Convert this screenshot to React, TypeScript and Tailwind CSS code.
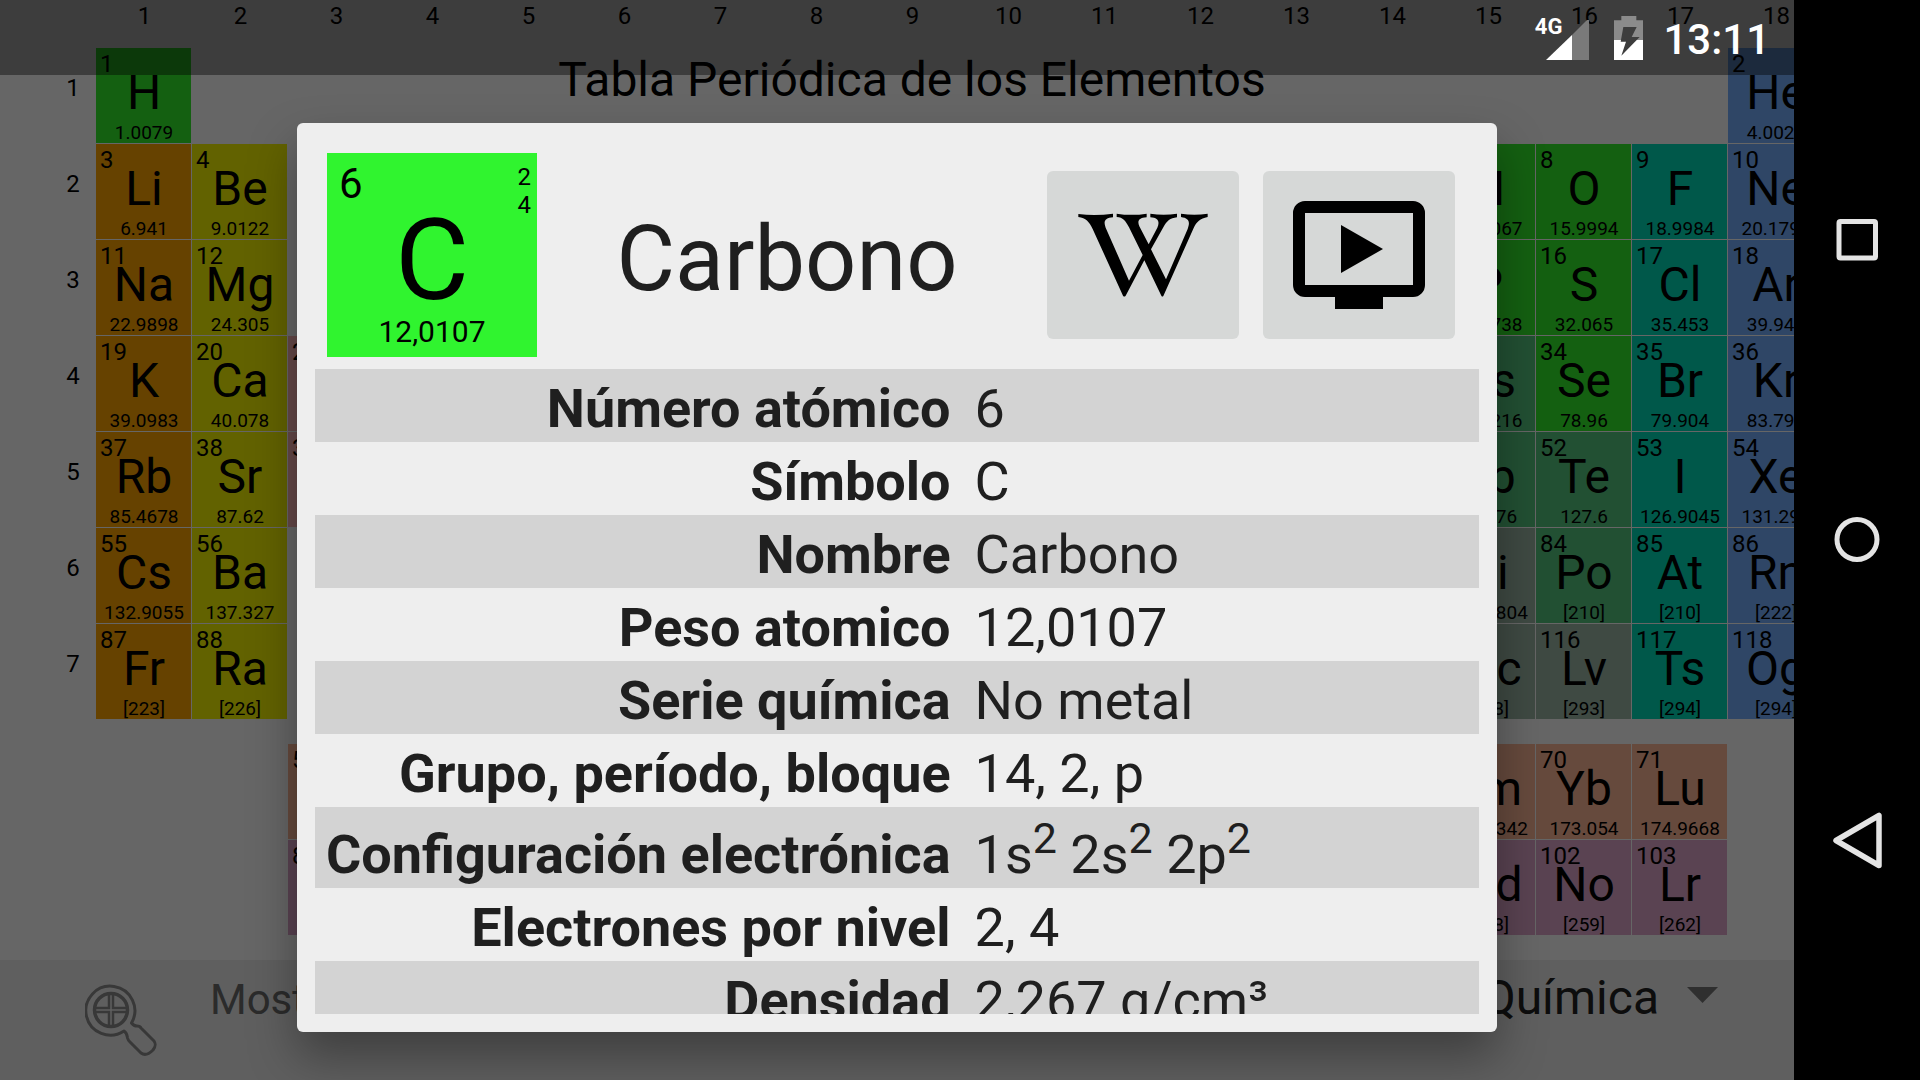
import React from "react";

type Series =
  | "nonmetal"
  | "alkali"
  | "alkaline"
  | "transition"
  | "metalloid"
  | "metal"
  | "halogen"
  | "noble"
  | "lanthanide"
  | "actinide";

const seriesColor: Record<Series, string> = {
  nonmetal: "bg-[#32f02c]",
  alkali: "bg-[#ffa500]",
  alkaline: "bg-[#f5f500]",
  transition: "bg-[#ffb6b6]",
  metalloid: "bg-[#55c880]",
  metal: "bg-[#9db8a8]",
  halogen: "bg-[#00dcb9]",
  noble: "bg-[#76afff]",
  lanthanide: "bg-[#ffb899]",
  actinide: "bg-[#e1a8cc]",
};

type Element = [num: number, symbol: string, mass: string, col: number, row: number, series: Series];

// Rows 1-7 are the periods, rows 9 and 10 the lanthanides and actinides.
const elements: Element[] = [
  [1, "H", "1.0079", 1, 1, "nonmetal"],
  [2, "He", "4.0026", 18, 1, "noble"],
  [3, "Li", "6.941", 1, 2, "alkali"],
  [4, "Be", "9.0122", 2, 2, "alkaline"],
  [7, "N", "14.0067", 15, 2, "nonmetal"],
  [8, "O", "15.9994", 16, 2, "nonmetal"],
  [9, "F", "18.9984", 17, 2, "halogen"],
  [10, "Ne", "20.1797", 18, 2, "noble"],
  [11, "Na", "22.9898", 1, 3, "alkali"],
  [12, "Mg", "24.305", 2, 3, "alkaline"],
  [15, "P", "30.9738", 15, 3, "nonmetal"],
  [16, "S", "32.065", 16, 3, "nonmetal"],
  [17, "Cl", "35.453", 17, 3, "halogen"],
  [18, "Ar", "39.948", 18, 3, "noble"],
  [19, "K", "39.0983", 1, 4, "alkali"],
  [20, "Ca", "40.078", 2, 4, "alkaline"],
  [21, "Sc", "44.9559", 3, 4, "transition"],
  [33, "As", "74.9216", 15, 4, "metalloid"],
  [34, "Se", "78.96", 16, 4, "nonmetal"],
  [35, "Br", "79.904", 17, 4, "halogen"],
  [36, "Kr", "83.798", 18, 4, "noble"],
  [37, "Rb", "85.4678", 1, 5, "alkali"],
  [38, "Sr", "87.62", 2, 5, "alkaline"],
  [39, "Y", "88.9059", 3, 5, "transition"],
  [51, "Sb", "121.76", 15, 5, "metalloid"],
  [52, "Te", "127.6", 16, 5, "metalloid"],
  [53, "I", "126.9045", 17, 5, "halogen"],
  [54, "Xe", "131.293", 18, 5, "noble"],
  [55, "Cs", "132.9055", 1, 6, "alkali"],
  [56, "Ba", "137.327", 2, 6, "alkaline"],
  [83, "Bi", "208.9804", 15, 6, "metal"],
  [84, "Po", "[210]", 16, 6, "metalloid"],
  [85, "At", "[210]", 17, 6, "halogen"],
  [86, "Rn", "[222]", 18, 6, "noble"],
  [87, "Fr", "[223]", 1, 7, "alkali"],
  [88, "Ra", "[226]", 2, 7, "alkaline"],
  [115, "Mc", "[288]", 15, 7, "metal"],
  [116, "Lv", "[293]", 16, 7, "metal"],
  [117, "Ts", "[294]", 17, 7, "halogen"],
  [118, "Og", "[294]", 18, 7, "noble"],
  [57, "La", "138.9055", 3, 9, "lanthanide"],
  [69, "Tm", "168.9342", 15, 9, "lanthanide"],
  [70, "Yb", "173.054", 16, 9, "lanthanide"],
  [71, "Lu", "174.9668", 17, 9, "lanthanide"],
  [89, "Ac", "[227]", 3, 10, "actinide"],
  [101, "Md", "[258]", 15, 10, "actinide"],
  [102, "No", "[259]", 16, 10, "actinide"],
  [103, "Lr", "[262]", 17, 10, "actinide"],
];

const groups = Array.from({ length: 18 }, (_, i) => i + 1);
const periods = [1, 2, 3, 4, 5, 6, 7];

function ElementCell({ element }: { element: Element }) {
  const [num, symbol, mass, col, row, series] = element;
  return (
    <div
      className={`mr-px mb-px overflow-hidden pt-1 pl-px text-center ${seriesColor[series]}`}
      style={{ gridColumn: col + 1, gridRow: row + 1 }}
    >
      <div className="pl-[3px] text-left text-[24px] leading-[24px]">{num}</div>
      <div className="text-[48px] leading-[33px]">{symbol}</div>
      <div className="mt-3 text-[19px] leading-[24px]">{mass}</div>
    </div>
  );
}

function PeriodicTable() {
  return (
    <div className="grid grid-cols-[repeat(19,96px)] grid-rows-[48px_repeat(7,96px)_24px_repeat(2,96px)]">
      {groups.map((g) => (
        <div
          key={g}
          className="pt-px pl-px text-center text-[24px] leading-[30px]"
          style={{ gridColumn: g + 1, gridRow: 1 }}
        >
          {g}
        </div>
      ))}
      {periods.map((p) => (
        <div
          key={p}
          className="pt-6 pl-[50px] text-center text-[24px] leading-[32px]"
          style={{ gridColumn: 1, gridRow: p + 1 }}
        >
          {p}
        </div>
      ))}
      <h1 className="col-start-4 col-end-17 row-start-2 text-center text-[48px] leading-[64px]">
        Tabla Periódica de los Elementos
      </h1>
      {elements.map((e) => (
        <ElementCell key={e[0]} element={e} />
      ))}
    </div>
  );
}

function Footer() {
  return (
    <footer className="mt-6 flex flex-1 items-start justify-between bg-[#eeeeee] pt-2 pr-[76px] pl-[85px]">
      <div className="flex items-start">
        <button type="button" aria-label="Ampliar" className="mt-4 mr-[51px]">
          <svg width="74" height="74" viewBox="0 0 74 74" fill="none" stroke="#8c8c8c" strokeWidth="3">
            <path
              d="M39 47 C42 49 42 51 42.500 54 C43 56 44 57 45 58 L56 69 C60 72 64 70 68 66 C71 62 71 60 69 57 L56 44 C55 42 54 42 52 42 C49 42 48 41 46.500 39 A24.500 24.500 0 1 0 39 47 Z"
              strokeLinejoin="round"
            />
            <circle cx="26" cy="26" r="16.500" strokeWidth="3.500" />
            <path d="M24 10 V24 H10 M28 10 V24 H42 M24 42 V28 H10 M28 42 V28 H42" strokeWidth="2.500" />
          </svg>
        </button>
        <label htmlFor="show" className="pt-[5px] text-[42px] leading-[54px] text-[#6b6b6b]">
          Mostrar
        </label>
      </div>
      <div className="flex items-start">
        <select
          id="show"
          className="appearance-none bg-transparent pt-px text-right text-[48px] leading-[58px] text-[#212121]"
        >
          <option>Serie Química</option>
        </select>
        <svg className="mt-[19px] ml-7 h-4 w-[31px]" viewBox="0 0 31 16" fill="#757575">
          <path d="M0 0H31L15.500 16Z" />
        </svg>
      </div>
    </footer>
  );
}

function StatusBar() {
  return (
    <div className="absolute inset-x-0 top-0 flex h-[75px] items-center justify-end bg-black/40 pr-6 text-white">
      <span className="-mr-4 self-start pt-[15px] text-[22px] leading-[24px] font-bold">4G</span>
      <svg className="mt-1 mr-[25px]" width="43" height="40" viewBox="0 0 43 40">
        <path d="M26 15 L43 -2 V40 H26 Z" fill="#7a7a7a" />
        <path d="M0 40 L26 15 V40 Z" fill="#fff" />
      </svg>
      <svg className="mr-5" width="29" height="44" viewBox="0 0 87 132">
        <path d="M22 0H67V13H87V72H0V13H22Z" fill="#8b8b8b" />
        <path d="M0 72H87V132H0Z" fill="#fff" />
        <path d="M28 33H68L53 63H77L22 119L36 77H20Z" fill="#3d3d3d" />
      </svg>
      <span className="pt-1 text-[42px] leading-[48px] font-medium">13:11</span>
    </div>
  );
}

const rows: [label: string, value: React.ReactNode][] = [
  ["Número atómico", "6"],
  ["Símbolo", "C"],
  ["Nombre", "Carbono"],
  ["Peso atomico", "12,0107"],
  ["Serie química", "No metal"],
  ["Grupo, período, bloque", "14, 2, p"],
  [
    "Configuración electrónica",
    <>
      1s<Sup>2</Sup> 2s<Sup>2</Sup> 2p<Sup>2</Sup>
    </>,
  ],
  ["Electrones por nivel", "2, 4"],
  ["Densidad", "2,267 g/cm³"],
];

function Sup({ children }: { children: React.ReactNode }) {
  return <span className="align-[20px] text-[43px] leading-[50px]">{children}</span>;
}

function ElementDialog() {
  return (
    <div
      role="dialog"
      aria-label="Carbono"
      className="flex min-h-0 flex-1 flex-col rounded-md bg-[#eeeeee] px-[18px] pt-[30px] pb-[18px] text-[#1f1f1f] shadow-[0_24px_48px_rgba(0,0,0,0.35)]"
    >
      <div className="mb-3 flex items-center pr-6 pl-3">
        <div className="h-[204px] w-[210px] bg-[#30f42f] pt-2.5 text-center text-black">
          <div className="flex justify-between pr-1.5 pl-3">
            <div className="text-[42px] leading-[42px]">6</div>
            <div className="text-[24px] leading-[28px]">
              2<br />4
            </div>
          </div>
          <div className="text-[114px] leading-[82px]">C</div>
          <div className="mt-3 text-[30px] leading-[38px]">12,0107</div>
        </div>
        <h2 className="flex-1 pt-2.5 pr-2.5 text-center text-[90px] leading-[106px]">Carbono</h2>
        <div className="flex gap-6">
          <button type="button" aria-label="Wikipedia" className="h-[168px] w-48 rounded-md bg-[#d6d8d7]">
            <svg viewBox="141 153 576 504" className="h-full w-full">
              <path d="M235 282 Q287 288 339 281 V292 C316 294 309 303 317 323 L387 482 L428 405 L387 322 C375 300 370 293 350 291 V281 Q395 288 440 281 V292 C414 294 412 304 418 319 L446 373 L472 323 C480 304 475 294 451 292 V281 Q491 287 531 281 V292 C510 295 501 302 490 322 L453 388 L498 478 L563 327 C571 304 567 295 543 291 V281 Q583 287 623 281 V291 C600 296 590 305 581 324 L490 528 Q487 532 484 527 L433 421 L377 527 Q373 532 369 527 L278 327 C267 304 258 295 235 291 Z" />
            </svg>
          </button>
          <button type="button" aria-label="Vídeo" className="h-[168px] w-48 rounded-md bg-[#d6d8d7]">
            <svg viewBox="789 153 576 504" className="h-full w-full">
              <path
                fillRule="evenodd"
                d="M915 243H1239A36 36 0 0 1 1275 279V495A36 36 0 0 1 1239 531H1149V567H1005V531H915A36 36 0 0 1 879 495V279A36 36 0 0 1 915 243ZM915 279V495H1239V279ZM1023 315L1149 387L1023 459Z"
              />
            </svg>
          </button>
        </div>
      </div>
      <div className="min-h-0 flex-1 overflow-hidden">
        <table className="w-full text-[54px] leading-[67px]">
          <tbody>
            {rows.map(([label, value]) => (
              <tr key={label} className="odd:bg-[#d3d3d3]">
                <th scope="row" className="w-px pt-1.5 pr-3 pl-[11px] text-right align-baseline font-bold whitespace-nowrap">
                  {label}
                </th>
                <td className="px-3 pt-1.5 align-baseline">{value}</td>
              </tr>
            ))}
          </tbody>
        </table>
      </div>
    </div>
  );
}

function NavBar() {
  const button = "flex flex-1 items-center justify-center";
  return (
    <nav className="flex w-[126px] flex-none flex-col bg-black py-[90px]">
      <button type="button" aria-label="Recientes" className={button}>
        <svg width="60" height="60" viewBox="0 0 60 60" fill="none" stroke="#e4e4e4" strokeWidth="5">
          <rect x="12" y="11.500" width="36.500" height="36.500" rx="1.500" strokeLinejoin="round" />
        </svg>
      </button>
      <button type="button" aria-label="Inicio" className={button}>
        <svg width="60" height="60" viewBox="0 0 60 60" fill="none" stroke="#e4e4e4" strokeWidth="5">
          <circle cx="30" cy="29.500" r="20" />
        </svg>
      </button>
      <button type="button" aria-label="Atrás" className={button}>
        <svg width="60" height="60" viewBox="0 0 60 60" fill="none" stroke="#e4e4e4" strokeWidth="5.500" strokeLinejoin="round">
          <path d="M9 30.500 L52 5.500 V55.500 Z" />
        </svg>
      </button>
    </nav>
  );
}

export default function App() {
  return (
    <div className="flex h-screen overflow-hidden font-['Roboto',sans-serif]">
      <main className="relative min-w-0 flex-1 overflow-hidden">
        <div className="flex h-full flex-col bg-white text-black">
          <PeriodicTable />
          <Footer />
        </div>
        <div className="absolute inset-0 flex flex-col bg-black/60 px-[297px] pt-[123px] pb-12">
          <ElementDialog />
        </div>
        <StatusBar />
      </main>
      <NavBar />
    </div>
  );
}
